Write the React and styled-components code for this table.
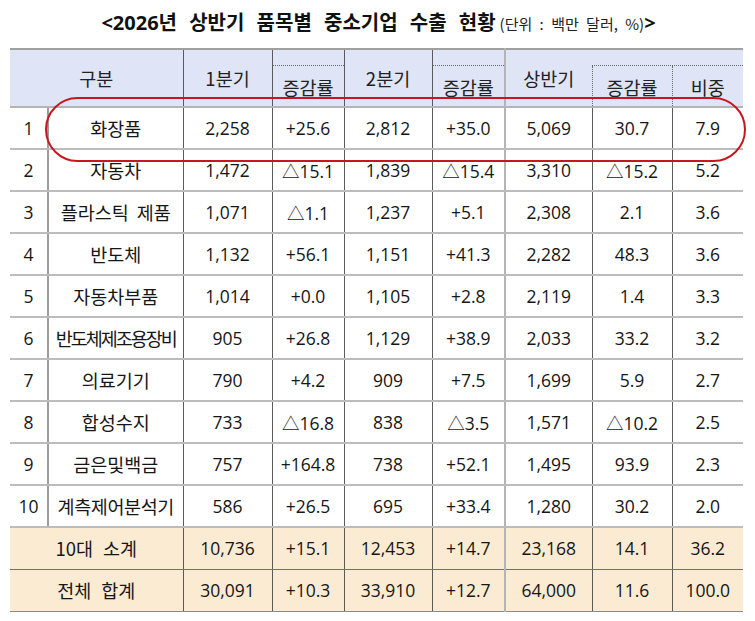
import React from "react";
import styled, { createGlobalStyle } from "styled-components";

const GlobalStyle = createGlobalStyle`
  html, body {
    margin: 0;
    padding: 0;
    background: #ffffff;
  }
  body {
    font-family: "Open Sans", "Noto Sans CJK KR", sans-serif;
    color: #161616;
  }
`;

const rows = [
  ["1", "화장품", "2,258", "+25.6", "2,812", "+35.0", "5,069", "30.7", "7.9"],
  ["2", "자동차", "1,472", "△15.1", "1,839", "△15.4", "3,310", "△15.2", "5.2"],
  ["3", "플라스틱 제품", "1,071", "△1.1", "1,237", "+5.1", "2,308", "2.1", "3.6"],
  ["4", "반도체", "1,132", "+56.1", "1,151", "+41.3", "2,282", "48.3", "3.6"],
  ["5", "자동차부품", "1,014", "+0.0", "1,105", "+2.8", "2,119", "1.4", "3.3"],
  ["6", "반도체제조용장비", "905", "+26.8", "1,129", "+38.9", "2,033", "33.2", "3.2"],
  ["7", "의료기기", "790", "+4.2", "909", "+7.5", "1,699", "5.9", "2.7"],
  ["8", "합성수지", "733", "△16.8", "838", "△3.5", "1,571", "△10.2", "2.5"],
  ["9", "금은및백금", "757", "+164.8", "738", "+52.1", "1,495", "93.9", "2.3"],
  ["10", "계측제어분석기", "586", "+26.5", "695", "+33.4", "1,280", "30.2", "2.0"],
];

const totals = [
  ["10대 소계", "10,736", "+15.1", "12,453", "+14.7", "23,168", "14.1", "36.2"],
  ["전체 합계", "30,091", "+10.3", "33,910", "+12.7", "64,000", "11.6", "100.0"],
];

const widths = [38, 135, 89, 72, 88, 73, 87, 80, 71];

// right-hand border of each column
const rightLines = [
  "2px solid #9c9c9c",
  "1px solid #5a5a5a",
  "1px solid #5a5a5a",
  "1px solid #5a5a5a",
  "1px solid #5a5a5a",
  "2px solid #b4b4b4",
  "1px solid #5a5a5a",
  "1px solid #5a5a5a",
  "none",
];

// item names squeezed like the original sheet
const nameSpacing = {
  "반도체제조용장비": "-2px",
  "계측제어분석기": "-0.4px",
};

export default function App() {
  return (
    <>
      <GlobalStyle />
      <Page>
        <Title>
          <TitleMain>&lt;2026년 상반기 품목별 중소기업 수출 현황</TitleMain>
          <TitleUnit>(단위 : 백만 달러, %)</TitleUnit>
          <TitleMain>&gt;</TitleMain>
        </Title>

        <TableWrap>
          <Table>
            <colgroup>
              {widths.map((w, i) => (
                <Col key={i} $w={w} />
              ))}
            </colgroup>
            <thead>
              <HeadRow $h={16}>
                <Head colSpan={2} rowSpan={2} $right={rightLines[1]}>
                  구분
                </Head>
                <Head rowSpan={2} $right={rightLines[2]}>
                  1분기
                </Head>
                <Head $right={rightLines[3]} $dotBottom />
                <Head rowSpan={2} $right={rightLines[4]}>
                  2분기
                </Head>
                <Head $right={rightLines[5]} $dotBottom />
                <Head rowSpan={2} $right="none">
                  상반기
                </Head>
                <Head colSpan={2} $right="none" $dotBottom />
              </HeadRow>
              <HeadRow $h={42}>
                <Head $right={rightLines[3]} $low>
                  증감률
                </Head>
                <Head $right={rightLines[5]} $low>
                  증감률
                </Head>
                <Head $left="1px dotted #6a6a6a" $right="1px dotted #6a6a6a" $low>
                  증감률
                </Head>
                <Head $right="none" $low>
                  비중
                </Head>
              </HeadRow>
            </thead>
            <tbody>
              {rows.map((r) => (
                <BodyRow key={r[0]}>
                  {r.map((v, i) => (
                    <Cell
                      key={i}
                      $right={rightLines[i]}
                      $kr={i === 1}
                      $spacing={i === 1 ? nameSpacing[v] : undefined}
                    >
                      {v}
                    </Cell>
                  ))}
                </BodyRow>
              ))}
              {totals.map((r, n) => (
                <BodyRow key={r[0]} $sum $last={n === totals.length - 1}>
                  {r.map((v, i) => (
                    <Cell
                      key={i}
                      colSpan={i === 0 ? 2 : 1}
                      $right={rightLines[i + 1]}
                      $kr={i === 0}
                      $words={i === 0 ? "6px" : undefined}
                    >
                      {v}
                    </Cell>
                  ))}
                </BodyRow>
              ))}
            </tbody>
          </Table>
          <Highlight />
        </TableWrap>
      </Page>
    </>
  );
}

const Page = styled.div`
  width: 755px;
  padding: 0 0 0 10px;
  box-sizing: border-box;
`;

const Title = styled.div`
  width: 733px;
  height: 48px;
  display: flex;
  justify-content: center;
  align-items: baseline;
  padding: 9px 0 0 4px;
  box-sizing: border-box;
  color: #111;
`;

const TitleMain = styled.span`
  font-size: 20px;
  font-weight: 700;
  word-spacing: 7px;
  line-height: 27px;
`;

const TitleUnit = styled.span`
  font-family: "Noto Sans CJK KR", sans-serif;
  font-size: 15px;
  margin-left: 4px;
  word-spacing: 4px;
  color: #222;
`;

const TableWrap = styled.div`
  position: relative;
  width: 733px;
`;

const Table = styled.table`
  width: 733px;
  table-layout: fixed;
  border-collapse: collapse;
  font-size: 17.5px;
`;

const Col = styled.col`
  width: ${({ $w }) => $w}px;
`;

const HeadRow = styled.tr`
  height: ${({ $h }) => $h}px;
  background: #dfe4f7;

  &:first-child > th {
    border-top: 2px solid #a0a0a0;
  }
`;

const Head = styled.th`
  padding: 0;
  font-family: "Noto Sans CJK KR", sans-serif;
  font-size: 18.5px;
  font-weight: 400;
  color: #222;
  text-align: center;
  vertical-align: middle;
  border-right: ${({ $right }) => $right};
  border-left: ${({ $left }) => $left || "none"};
  border-bottom: ${({ $dotBottom }) =>
    $dotBottom ? "1px dotted #6a6a6a" : "2px solid #b4b4b4"};
  padding-top: ${({ $low }) => ($low ? "2px" : "0")};
`;

const BodyRow = styled.tr`
  height: 42px;
  background: ${({ $sum }) => ($sum ? "#fbebd3" : "#ffffff")};

  & > td {
    border-bottom: ${({ $sum, $last }) =>
      $last ? "1px solid #8a8a8a" : $sum ? "1px solid #707070" : "2px solid #bcbcbc"};
  }
`;

const Cell = styled.td`
  padding: 0;
  text-align: center;
  vertical-align: middle;
  white-space: nowrap;
  font-family: ${({ $kr }) =>
    $kr ? `"Noto Sans CJK KR", sans-serif` : `"Open Sans", "Noto Sans CJK KR", sans-serif`};
  font-size: ${({ $kr }) => ($kr ? "18.5px" : "17.5px")};
  border-right: ${({ $right }) => $right};
  letter-spacing: ${({ $spacing }) => $spacing || "normal"};
  word-spacing: ${({ $words }) => $words || "4px"};
`;

const Highlight = styled.div`
  position: absolute;
  left: 35px;
  top: 49px;
  width: 701px;
  height: 65px;
  box-sizing: border-box;
  border: 2.5px solid #c8161d;
  border-radius: 33px;
  pointer-events: none;
`;
